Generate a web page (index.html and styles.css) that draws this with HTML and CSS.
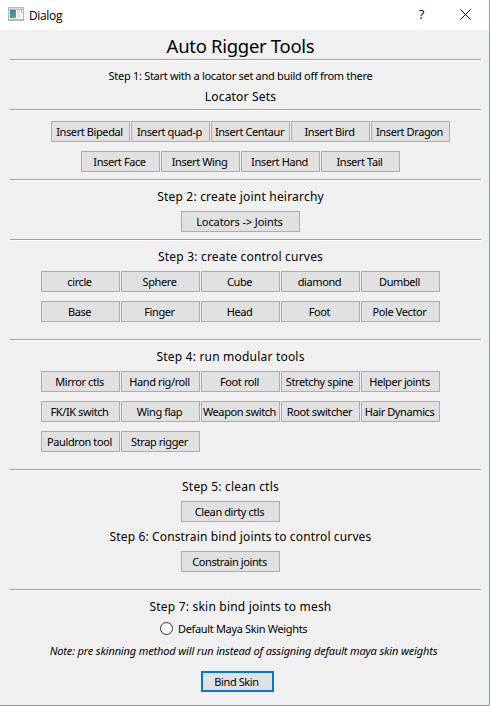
FILE: index.html
```html
<!DOCTYPE html>
<html lang="en">
<head>
<meta charset="utf-8">
<title>Dialog</title>
<link rel="stylesheet" href="styles.css">
</head>
<body>
<main class="dialog">
  <header class="titlebar">
    <svg class="app-icon" width="16" height="14" viewBox="0 0 16 14" aria-hidden="true">
      <defs><linearGradient id="pane" x1="0" y1="0" x2="1" y2="1"><stop offset="0" stop-color="#4678a8"/><stop offset="1" stop-color="#55b176"/></linearGradient></defs>
      <path fill="#b4b9bf" d="M0 0h16v14H0z"/>
      <path fill="#f5f7f8" d="M1 3h14v9H1z"/>
      <path fill="#d9dde2" d="M1 1h14v1H1z"/>
      <path fill="url(#pane)" d="M2 3h6v8H2z"/>
      <path fill="#dfe5e8" d="M9 3h3v8H9z"/>
      <path fill="#8ebdc8" d="M13 2h1v4h-1z"/>
    </svg>
    <span class="caption">Dialog</span>
    <span class="help">?</span>
    <svg class="close" width="11" height="11" viewBox="0 0 11 11" aria-label="Close"><path d="M.5.5l10 10M10.5.5l-10 10" stroke="#000" fill="none"/></svg>
  </header>
  <h1 class="title">Auto Rigger Tools</h1>
  <section class="group sets-head">
    <p class="small">Step 1: Start with a locator set and build off from there</p>
    <h2 class="step sets">Locator Sets</h2>
  </section>
  <section class="group locators">
    <div class="row five">
      <button>Insert Bipedal</button><button>Insert quad-p</button><button>Insert Centaur</button><button>Insert Bird</button><button>Insert Dragon</button>
    </div>
    <div class="row four">
      <button>Insert Face</button><button>Insert Wing</button><button>Insert Hand</button><button>Insert Tail</button>
    </div>
  </section>
  <section class="group joints">
    <h2 class="step">Step 2: create joint heirarchy</h2>
    <div class="row single"><button class="wide">Locators -&gt; Joints</button></div>
  </section>
  <section class="group curves">
    <h2 class="step">Step 3: create control curves</h2>
    <div class="row"><button>circle</button><button>Sphere</button><button>Cube</button><button>diamond</button><button>Dumbell</button></div>
    <div class="row"><button>Base</button><button>Finger</button><button>Head</button><button>Foot</button><button>Pole Vector</button></div>
  </section>
  <section class="group modular">
    <h2 class="step shifted">Step 4: run modular tools</h2>
    <div class="row"><button>Mirror ctls</button><button>Hand rig/roll</button><button>Foot roll</button><button>Stretchy spine</button><button>Helper joints</button></div>
    <div class="row"><button>FK/IK switch</button><button>Wing flap</button><button>Weapon switch</button><button>Root switcher</button><button>Hair Dynamics</button></div>
    <div class="row"><button>Pauldron tool</button><button>Strap rigger</button></div>
  </section>
  <section class="group finish">
    <h2 class="step shifted">Step 5: clean ctls</h2>
    <div class="row single"><button class="medium">Clean dirty ctls</button></div>
    <h2 class="step next">Step 6: Constrain bind joints to control curves</h2>
    <div class="row single"><button class="medium">Constrain joints</button></div>
  </section>
  <section class="group skin">
    <h2 class="step">Step 7: skin bind joints to mesh</h2>
    <label class="option"><span class="radio"></span><span>Default Maya Skin Weights</span></label>
    <p class="small note">Note: pre skinning method will run instead of assigning default maya skin weights</p>
    <div class="row bind"><button class="primary">Bind Skin</button></div>
  </section>
</main>
</body>
</html>
```
FILE: styles.css
```css
* { box-sizing: border-box; }
body { margin: 0; }
.dialog {
  width: 490px;
  height: 706px;
  background: #f0f0f0;
  border-right: 1px solid #4db8c8;
  border-bottom: 1px solid #4db8c8;
  font-family: "Noto Sans", sans-serif;
  font-size: 11px;
  letter-spacing: -0.3px;
  color: #000;
  overflow: hidden;
  white-space: nowrap;
}
.titlebar {
  display: flex;
  align-items: center;
  height: 30px;
  padding: 0 18px 2px 8px;
  background: #fff;
}
.caption {
  flex: 1;
  margin-left: 5px;
  padding-top: 2px;
  font-family: "Open Sans", sans-serif;
  font-size: 12px;
  letter-spacing: -0.35px;
}
.help { margin-right: 36px; font-family: "Open Sans", sans-serif; font-size: 13px; }
.title, .step, .small { margin: 0; padding-right: 8px; font-weight: normal; text-align: center; }
.title { height: 29px; font-size: 18.5px; line-height: 32px; letter-spacing: -0.3px; }
.group { border-top: 1px solid #a0a0a0; margin: 0 8px 0 10px; box-shadow: inset 0 1px #fff; }
.group .step, .group .small { padding: 0; margin-left: -10px; }
.step { height: 20px; line-height: 20px; font-size: 12px; letter-spacing: 0.2px; }
.sets-head { height: 50px; padding-top: 6px; }
.step.sets { line-height: 22px; }
.group .step.shifted { padding-right: 20px; }
.small { height: 20px; line-height: 20px; }
.locators { height: 70px; padding-top: 11px; }
.joints { height: 60px; padding-top: 7px; }
.curves { height: 100px; padding-top: 7px; }
.modular { height: 130px; padding-top: 7px; }
.finish { height: 120px; padding-top: 7px; }
.skin { padding-top: 7px; }
.row { display: flex; gap: 1px; height: 21px; margin: 9px 0 0 31px; }
.step + .row { margin-top: 4px; }
.row.five { margin: 0 0 0 41px; }
.row.four { margin-left: 71px; }
.row.single { margin-left: 171px; }
.row.bind { margin: 10px 0 0 191px; }
.step.next { margin-top: 5px; letter-spacing: 0.13px; }
button {
  width: 79px;
  height: 21px;
  padding: 0 2px 0 0;
  border: 1px solid #adadad;
  border-radius: 0;
  background: #e1e1e1;
  font: inherit;
  letter-spacing: -0.4px;
  color: inherit;
  white-space: nowrap;
}
.wide { width: 119px; letter-spacing: -0.1px; }
.medium { width: 99px; }
.primary { width: 73px; border: 2px solid #0078d7; }
.option { display: flex; align-items: center; gap: 5px; height: 22px; margin-left: 150px; letter-spacing: -0.34px; }
.radio { width: 13px; height: 13px; border: 1px solid #333; border-radius: 50%; background: #fff; }
.group .note { margin: 2px 0 0 -4px; font-style: italic; letter-spacing: -0.15px; }
```
